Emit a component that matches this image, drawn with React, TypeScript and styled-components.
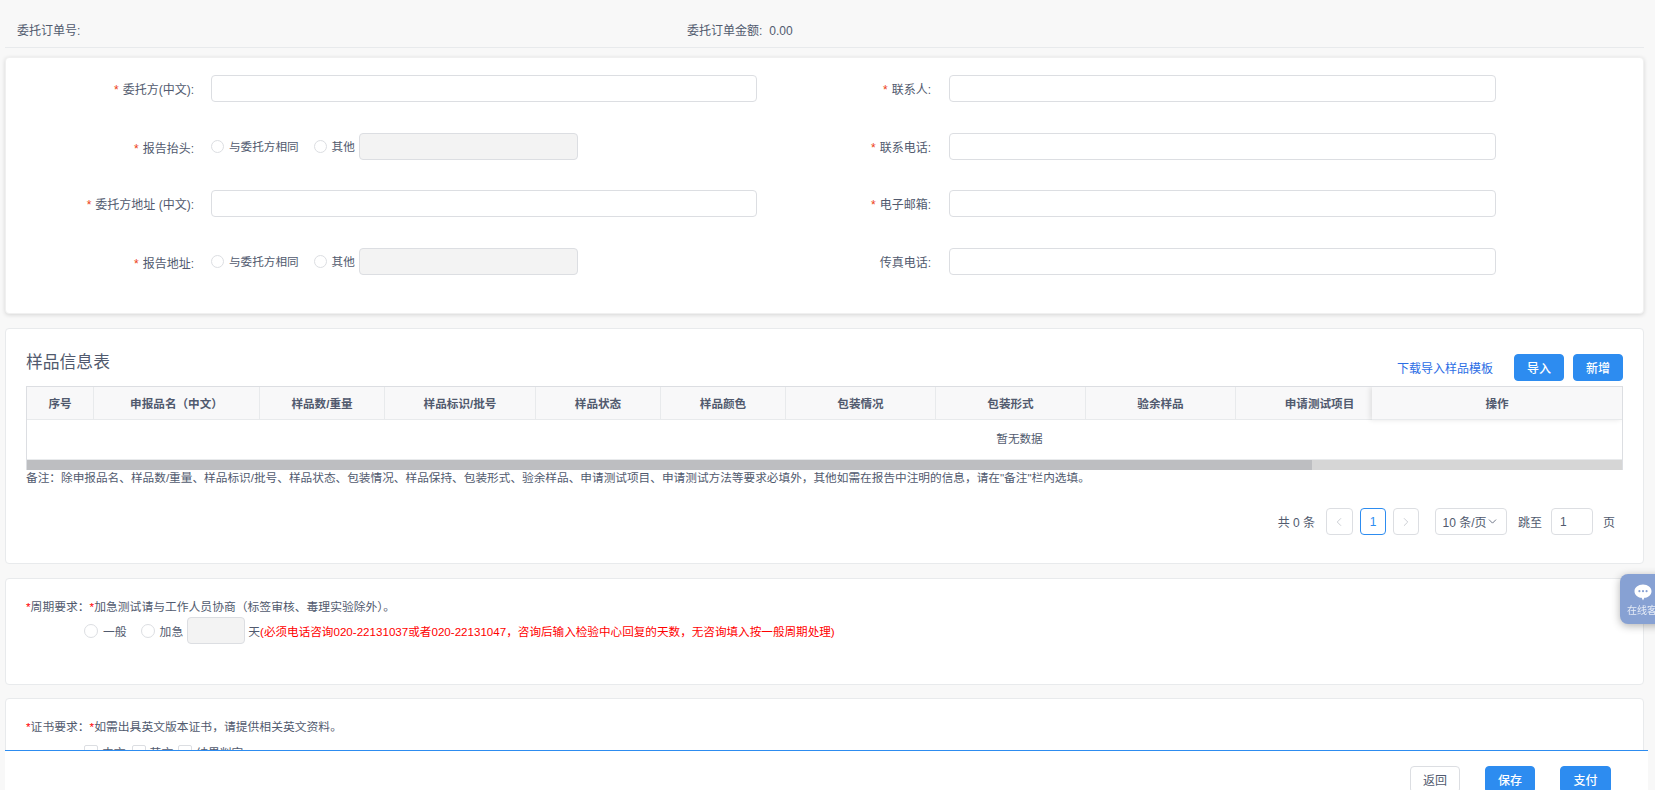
import React from "react";
import styled, { createGlobalStyle } from "styled-components";
import { ChevronDown, ChevronLeft, ChevronRight } from "lucide-react";

const GlobalStyle = createGlobalStyle`
  html, body {
    margin: 0;
    height: 100%;
    overflow: hidden;
    background: #f8f8f8;
  }
  * { box-sizing: border-box; }
  body {
    font-family: "Liberation Sans", "Noto Sans CJK SC", sans-serif;
    font-size: 12px;
    color: #515a6e;
  }
`;

const Page = styled.div`
  padding: 0 11px 0 5px;
`;

const Header = styled.div`
  height: 48px;
  display: grid;
  grid-template-columns: 670px 1fr;
  align-items: end;
  padding: 0 12px 7px;
  border-bottom: 1px solid #e8eaec;
  line-height: 18px;
`;

const Amount = styled.span`
  margin-left: 7px;
`;

const Card = styled.section<{ $top: number; $height: number }>`
  margin-top: ${p => p.$top}px;
  height: ${p => p.$height}px;
  background: #fff;
  border: 1px solid #e8eaec;
  border-radius: 4px;
  padding-left: 20px;
  padding-right: 20px;
`;

const FormCard = styled(Card)`
  padding: 17px 0 0;
  border-color: #f0f0f0;
  box-shadow: 0 1px 4px rgba(0, 0, 0, 0.14);
  display: grid;
  grid-template-columns: 737px 1fr;
  grid-auto-rows: 27px;
  row-gap: 30.5px;
`;

const Field = styled.div<{ $right?: boolean }>`
  display: grid;
  grid-template-columns: 188px ${p => (p.$right ? 547 : 546)}px;
  column-gap: ${p => (p.$right ? 18 : 17)}px;
  align-items: center;
`;

const Label = styled.label`
  text-align: right;
  white-space: nowrap;
`;

const Star = styled.span`
  color: #ed4014;
  margin-right: 4px;
`;

const TextInput = styled.input`
  display: block;
  width: 100%;
  height: 27px;
  padding: 0 7px;
  background: #fff;
  border: 1px solid #dcdee2;
  border-radius: 4px;
  outline: none;
`;

const DisabledInput = styled(TextInput)<{ $width: number }>`
  width: ${p => p.$width}px;
  background: #f3f3f3;
`;

const Choices = styled.div`
  display: flex;
  align-items: center;
`;

const ReportChoices = styled(Choices)`
  margin-bottom: 2px;
  font-size: 11.6px;
`;

const Choice = styled.span<{ $after: number }>`
  display: inline-flex;
  align-items: center;
  margin-right: ${p => p.$after}px;
  white-space: nowrap;
`;

const Radio = styled.i<{ $size: number }>`
  width: ${p => p.$size}px;
  height: ${p => p.$size}px;
  margin-right: 5px;
  border: 1px solid #dcdee2;
  border-radius: 50%;
  background: #fff;
`;

const Check = styled.i`
  width: 14px;
  height: 14px;
  margin-right: 4px;
  border: 1px solid #dcdee2;
  border-radius: 2px;
  background: #fff;
`;

const Toolbar = styled.div`
  display: flex;
  justify-content: space-between;
  align-items: flex-start;
  padding-top: 25px;
`;

const Title = styled.h2`
  margin: 0;
  font-size: 16.8px;
  font-weight: 400;
  line-height: 18px;
  color: #515a6e;
`;

const Actions = styled.div`
  display: flex;
  align-items: center;
  gap: 9px;
`;

const DownloadLink = styled.a`
  margin-right: 12px;
  color: #2b6de5;
  white-space: nowrap;
`;

const Button = styled.button<{ $plain?: boolean; $width?: number }>`
  width: ${p => p.$width ?? 50}px;
  height: 27px;
  padding: 0;
  flex: none;
  border: 1px solid ${p => (p.$plain ? "#dcdee2" : "#2d8cf0")};
  border-radius: 4px;
  background: ${p => (p.$plain ? "#fff" : "#2d8cf0")};
  color: ${p => (p.$plain ? "#515a6e" : "#fff")};
  font: inherit;
  font-weight: ${p => (p.$plain ? 400 : 500)};
`;

const TableFrame = styled.div`
  position: relative;
  margin-top: 5px;
  height: 84px;
  border: 1px solid #dcdee2;
  border-bottom: 0;
  overflow: hidden;
  font-size: 11.6px;
`;

const ScrollArea = styled.div`
  width: 1985px;
`;

const HeadRow = styled.div`
  display: grid;
  grid-template-columns: 67px 166px 125px 151px 125px 125px 150px 150px 150px 168px;
  height: 33px;
  background: #f8f8f9;
  border-bottom: 1px solid #e8eaec;
`;

const HeadCell = styled.div`
  display: flex;
  align-items: center;
  justify-content: center;
  font-weight: 700;
  white-space: nowrap;
  border-right: 1px solid #e8eaec;
`;

const EmptyRow = styled.div`
  height: 40px;
  line-height: 38px;
  text-align: center;
  background: #fff;
  border-bottom: 1px solid #e8eaec;
`;

const FixedHead = styled(HeadCell)`
  position: absolute;
  top: 0;
  right: 0;
  width: 250px;
  height: 33px;
  background: #f8f8f9;
  border-right: 0;
  border-bottom: 1px solid #e8eaec;
  box-shadow: -2px 0 5px rgba(0, 0, 0, 0.1);
`;

const ScrollTrack = styled.div`
  height: 10px;
  background: #d6d6d6;
`;

const ScrollThumb = styled.div`
  width: 1285px;
  height: 100%;
  background: #bdbec1;
`;

const Note = styled.p`
  margin: 0;
  font-size: 11.67px;
  line-height: 16px;
  white-space: nowrap;
`;

const Pager = styled.div`
  display: flex;
  justify-content: flex-end;
  align-items: center;
  margin-top: 22px;
  padding-right: 8px;
  height: 27px;
  white-space: nowrap;
`;

const PagerBox = styled.span<{ $active?: boolean; $width: number; $after: number }>`
  display: inline-flex;
  align-items: center;
  justify-content: center;
  width: ${p => p.$width}px;
  height: 27px;
  margin-right: ${p => p.$after}px;
  border: 1px solid ${p => (p.$active ? "#2d8cf0" : "#dcdee2")};
  border-radius: 4px;
  color: ${p => (p.$active ? "#2d8cf0" : "#515a6e")};
  background: #fff;
`;

const PagerArrow = styled(PagerBox)`
  color: #c5c8ce;
`;

const PagerText = styled.span<{ $after: number }>`
  margin-right: ${p => p.$after}px;
`;

const JumpInput = styled(PagerBox)`
  justify-content: flex-start;
  padding-left: 8px;
`;

const RequirementLine = styled.div`
  padding: 19px 0 1px;
  font-size: 11.8px;
  line-height: 18px;
  white-space: nowrap;
`;

const Red = styled.span`
  color: #f00;
`;

const RedNote = styled(Red)`
  font-size: 11.6px;
`;

const OptionRow = styled(Choices)<{ $gap?: number }>`
  padding-left: 58px;
  margin-top: ${p => p.$gap ?? 0}px;
  font-size: 11.8px;
  white-space: nowrap;
`;

const DaysInput = styled(DisabledInput)`
  margin-right: 3px;
  flex: none;
`;

const Footer = styled.footer`
  position: fixed;
  left: 5px;
  right: 7px;
  top: 750px;
  bottom: 0;
  display: flex;
  justify-content: flex-end;
  gap: 25px;
  padding: 15px 37px 0 0;
  background: #fff;
  border-top: 1px solid #2d8cf0;
  overflow: hidden;
`;

const ChatWidget = styled.aside`
  position: fixed;
  left: 1620px;
  top: 574px;
  width: 62px;
  height: 50px;
  padding: 10px 0 0 7px;
  border-radius: 8px 0 0 8px;
  background: #87a1d3;
  box-shadow: 0 2px 8px rgba(0, 0, 0, 0.3);
  color: #e6ecf7;
  font-size: 10px;
  line-height: 14px;
  white-space: nowrap;
`;

const ChatIcon = styled.svg`
  display: block;
  width: 18px;
  height: 17px;
  margin: 0 0 3px 7px;
`;

const columns = ["序号", "申报品名（中文）", "样品数/重量", "样品标识/批号", "样品状态", "样品颜色", "包装情况", "包装形式", "验余样品", "申请测试项目"];

const Required = ({ children }: { children: React.ReactNode }) => (
  <Label>
    <Star>*</Star>
    {children}
  </Label>
);

const ReportChoice = () => (
  <ReportChoices>
    <Choice $after={15}><Radio $size={13} />与委托方相同</Choice>
    <Choice $after={4}><Radio $size={13} />其他</Choice>
    <DisabledInput $width={219} disabled />
  </ReportChoices>
);

export default function App() {
  return (
    <Page>
      <GlobalStyle />
      <Header>
        <span>委托订单号:</span>
        <span>委托订单金额:<Amount>0.00</Amount></span>
      </Header>

      <FormCard $top={9} $height={257}>
        <Field>
          <Required>委托方(中文):</Required>
          <TextInput />
        </Field>
        <Field $right>
          <Required>联系人:</Required>
          <TextInput />
        </Field>
        <Field>
          <Required>报告抬头:</Required>
          <ReportChoice />
        </Field>
        <Field $right>
          <Required>联系电话:</Required>
          <TextInput />
        </Field>
        <Field>
          <Required>委托方地址 (中文):</Required>
          <TextInput />
        </Field>
        <Field $right>
          <Required>电子邮箱:</Required>
          <TextInput />
        </Field>
        <Field>
          <Required>报告地址:</Required>
          <ReportChoice />
        </Field>
        <Field $right>
          <Label>传真电话:</Label>
          <TextInput />
        </Field>
      </FormCard>

      <Card $top={14} $height={236}>
        <Toolbar>
          <Title>样品信息表</Title>
          <Actions>
            <DownloadLink>下载导入样品模板</DownloadLink>
            <Button>导入</Button>
            <Button>新增</Button>
          </Actions>
        </Toolbar>
        <TableFrame>
          <ScrollArea>
            <HeadRow>
              {columns.map(name => (
                <HeadCell key={name}>{name}</HeadCell>
              ))}
            </HeadRow>
            <EmptyRow>暂无数据</EmptyRow>
          </ScrollArea>
          <FixedHead>操作</FixedHead>
          <ScrollTrack>
            <ScrollThumb />
          </ScrollTrack>
        </TableFrame>
        <Note>备注：除申报品名、样品数/重量、样品标识/批号、样品状态、包装情况、样品保持、包装形式、验余样品、申请测试项目、申请测试方法等要求必填外，其他如需在报告中注明的信息，请在"备注"栏内选填。</Note>
        <Pager>
          <PagerText $after={11}>共 0 条</PagerText>
          <PagerArrow $width={27} $after={7}><ChevronLeft size={14} strokeWidth={1.5} /></PagerArrow>
          <PagerBox $active $width={26} $after={7}>1</PagerBox>
          <PagerArrow $width={26} $after={16}><ChevronRight size={14} strokeWidth={1.5} /></PagerArrow>
          <PagerBox $width={72} $after={11}>10 条/页<ChevronDown size={13} strokeWidth={1.5} /></PagerBox>
          <PagerText $after={9}>跳至</PagerText>
          <JumpInput $width={42} $after={10}>1</JumpInput>
          <span>页</span>
        </Pager>
      </Card>

      <Card $top={14} $height={107}>
        <RequirementLine>
          <Red>*</Red>周期要求：<Red>*</Red>加急测试请与工作人员协商（标签审核、毒理实验除外）。
        </RequirementLine>
        <OptionRow>
          <Choice $after={14}><Radio $size={14} />一般</Choice>
          <Choice $after={4}><Radio $size={14} />加急</Choice>
          <DaysInput $width={58} disabled />
          天<RedNote>(必须电话咨询020-22131037或者020-22131047，咨询后输入检验中心回复的天数，无咨询填入按一般周期处理)</RedNote>
        </OptionRow>
      </Card>

      <Card $top={13} $height={120}>
        <RequirementLine>
          <Red>*</Red>证书要求：<Red>*</Red>如需出具英文版本证书，请提供相关英文资料。
        </RequirementLine>
        <OptionRow $gap={6}>
          <Choice $after={6}><Check />中文</Choice>
          <Choice $after={5}><Check />英文</Choice>
          <Choice $after={0}><Check />结果判定</Choice>
        </OptionRow>
      </Card>

      <ChatWidget>
        <ChatIcon viewBox="0 0 20 19">
          <path fill="#fff" d="M10 0.5C4.6 0.5 0.5 3.8 0.5 8c0 3.9 3.4 7 8 7.4L10 18.5l1.5-3.1c4.6-.4 8-3.5 8-7.4C19.5 3.8 15.4 0.5 10 0.5z" />
          <circle cx="6" cy="8" r="1.2" fill="#87a1d3" />
          <circle cx="10" cy="8" r="1.2" fill="#87a1d3" />
          <circle cx="14" cy="8" r="1.2" fill="#87a1d3" />
        </ChatIcon>
        在线客服
      </ChatWidget>

      <Footer>
        <Button $plain>返回</Button>
        <Button>保存</Button>
        <Button $width={51}>支付</Button>
      </Footer>
    </Page>
  );
}
